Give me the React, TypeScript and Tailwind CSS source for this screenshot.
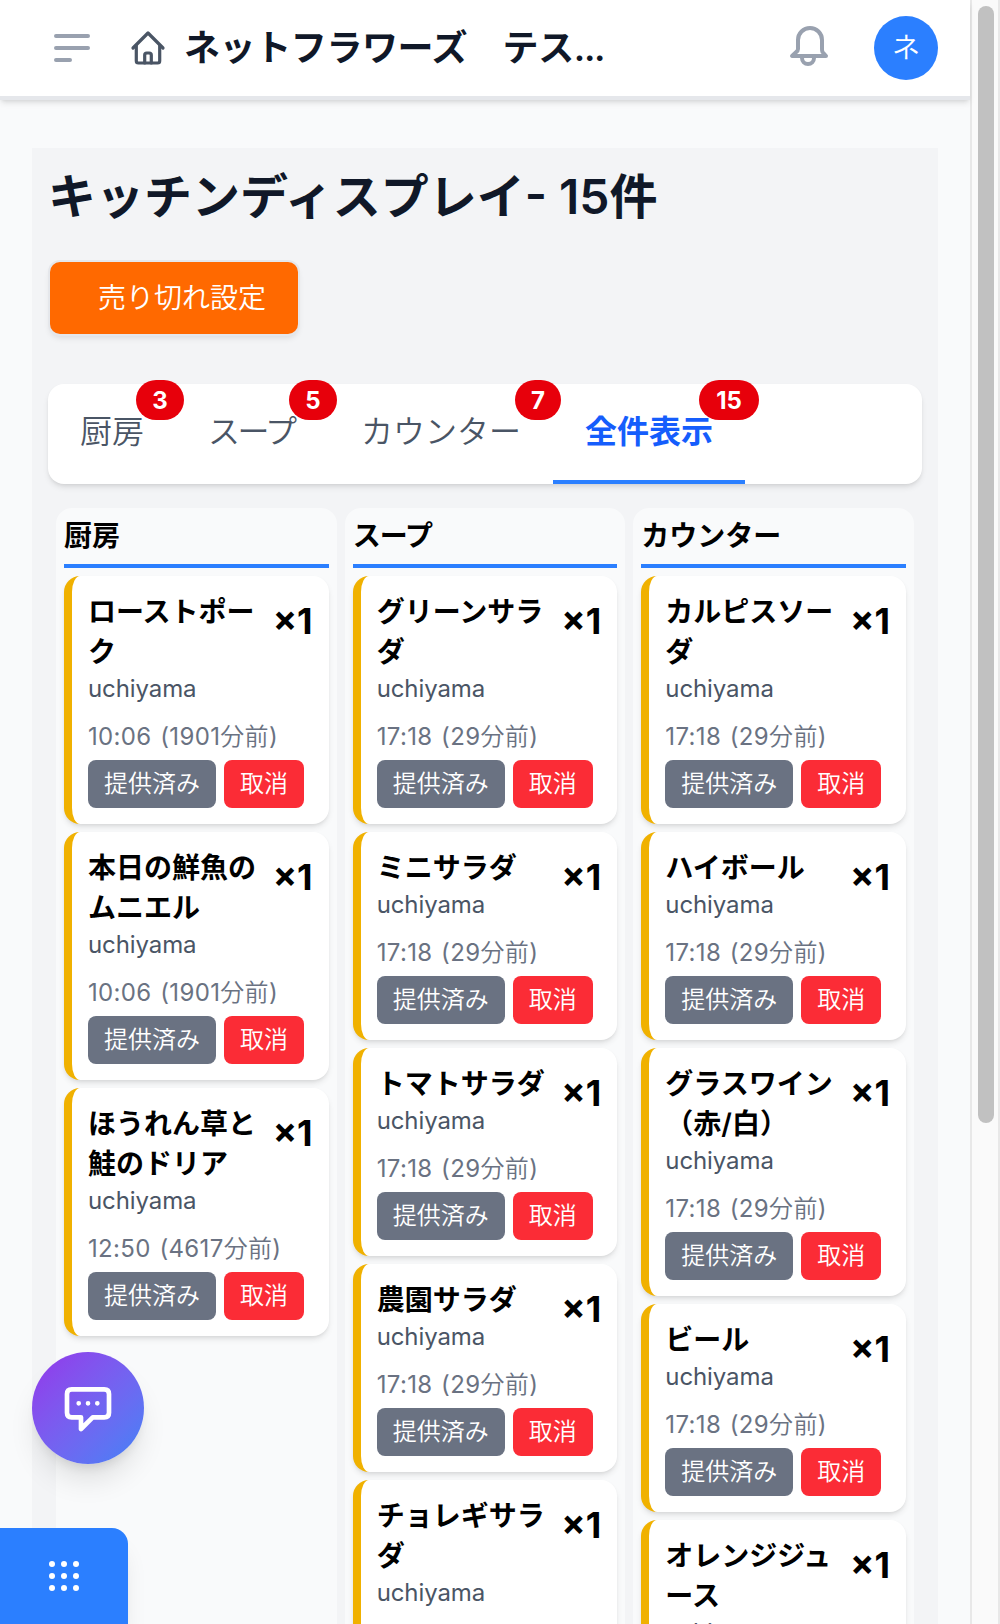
import { useState } from 'react';

type Order = { name: string; user: string; time: string; ago: number };

const u = 'uchiyama';

const stations: { name: string; tight?: boolean; orders: Order[] }[] = [
  {
    name: '厨房',
    orders: [
      { name: 'ローストポー\nク', user: u, time: '10:06', ago: 1901 },
      { name: '本日の鮮魚の\nムニエル', user: u, time: '10:06', ago: 1901 },
      { name: 'ほうれん草と\n鮭のドリア', user: u, time: '12:50', ago: 4617 },
    ],
  },
  {
    name: 'スープ',
    tight: true,
    orders: [
      { name: 'グリーンサラ\nダ', user: u, time: '17:18', ago: 29 },
      { name: 'ミニサラダ', user: u, time: '17:18', ago: 29 },
      { name: 'トマトサラダ', user: u, time: '17:18', ago: 29 },
      { name: '農園サラダ', user: u, time: '17:18', ago: 29 },
      { name: 'チョレギサラ\nダ', user: u, time: '17:18', ago: 29 },
    ],
  },
  {
    name: 'カウンター',
    orders: [
      { name: 'カルピスソー\nダ', user: u, time: '17:18', ago: 29 },
      { name: 'ハイボール', user: u, time: '17:18', ago: 29 },
      { name: 'グラスワイン\n（赤/白）', user: u, time: '17:18', ago: 29 },
      { name: 'ビール', user: u, time: '17:18', ago: 29 },
      { name: 'オレンジジュ\nース', user: u, time: '17:18', ago: 29 },
    ],
  },
];

const tabs = [
  { label: '厨房', count: 3, width: 'w-[128px]', badge: '-right-2 w-12' },
  { label: 'スープ', count: 5, width: 'w-[153px]', badge: '-right-2 w-12', tight: true },
  { label: 'カウンター', count: 7, width: 'w-[224px]', badge: '-right-2 w-[46px]' },
  { label: '全件表示', count: 15, width: 'w-[192px]', badge: '-right-3.5 w-[60px]' },
];

function Header() {
  return (
    <header className="relative flex h-[100px] shrink-0 items-center border-b-4 border-gray-200 bg-white pl-12 pr-8 shadow-md">
      <svg className="h-12 w-12 shrink-0" viewBox="0 0 48 48" fill="none" stroke="#99a1af" strokeWidth="4" strokeLinecap="round">
        <path d="M8 12H40M8 24H40M8 36H22" />
      </svg>
      <svg className="ml-8 h-10 w-10 shrink-0" viewBox="0 0 40 40" fill="none" stroke="#4a5565" strokeWidth="3.2" strokeLinecap="round" strokeLinejoin="round">
        <path d="M5 20 20 5 35 20" />
        <path d="M8.3 17.5V33Q8.3 35 10.3 35H29.7Q31.7 35 31.7 33V17.5" />
        <path d="M16.7 35V27Q16.7 25 18.7 25H21.3Q23.3 25 23.3 27V35" />
      </svg>
      <h1 className="ml-4 w-[430px] whitespace-pre text-[36px] font-semibold leading-[56px] tracking-[-0.4px] text-gray-900">
        ネットフラワーズ　テス<span className="tracking-[-1.4px]">...</span>
      </h1>
      <svg className="ml-auto h-12 w-12 shrink-0" viewBox="0 0 48 48" fill="none" stroke="#99a1af" strokeWidth="4" strokeLinecap="round" strokeLinejoin="round">
        <path d="M6 32H40L36.5 28Q36 27 36 25V16A12 12 0 0 0 12 16V25Q12 27 10 28.3Z" />
        <path d="M16 32V34A6 6 0 0 0 28 34V32" />
      </svg>
      <div className="ml-10 flex h-16 w-16 items-center justify-center rounded-full bg-[#2b7fff] text-[28px] font-[350] text-white">ネ</div>
    </header>
  );
}

function OrderCard({ order }: { order: Order }) {
  return (
    <div className="rounded-2xl border-l-8 border-[#f0b100] bg-white p-4 shadow-md">
      <div className="flex justify-between">
        <div>
          <div className="whitespace-pre text-[28px] font-semibold leading-10">{order.name}</div>
          <div className="pt-px text-2xl leading-8 tracking-[-0.1px] text-gray-600">{order.user}</div>
        </div>
        <span className="pt-px text-4xl font-bold leading-[56px]">×1</span>
      </div>
      <div className="mt-4 whitespace-nowrap text-2xl leading-8 tracking-[0.35px] text-gray-500 [word-spacing:1.5px]">
        {order.time} ({order.ago}<span className="font-[350]">分前</span>)
      </div>
      <div className="mt-[7px] flex gap-2 text-2xl font-[350] text-white">
        <button className="h-12 w-32 rounded-lg bg-gray-500">提供済み</button>
        <button className="h-12 w-20 rounded-lg bg-[#fb2c36]">取消</button>
      </div>
    </div>
  );
}

export default function App() {
  const [active, setActive] = useState(3);

  return (
    <div className="relative flex h-[1624px] w-[1000px] overflow-hidden bg-gray-50 font-['Inter','Noto_Sans_CJK_JP',sans-serif] text-black">
      <div className="flex h-full w-[970px] flex-col">
        <Header />

        <main className="mx-8 mt-12 h-[1700px] shrink-0 bg-gray-100 px-4 pt-[17px]">
          <h2 className="text-[48px] font-semibold leading-[64px] text-gray-900">キッチンディスプレイ- 15件</h2>
          <button className="ml-0.5 mt-[33px] h-[72px] w-[248px] rounded-[10px] bg-[#ff6900] pl-4 text-[28px] font-[350] text-white shadow-[0_0_0_2px_#e5e7eb,0_4px_6px_rgba(0,0,0,0.1)]">
            売り切れ設定
          </button>

          <nav className="mt-[50px] flex h-[100px] rounded-2xl bg-white shadow-md">
            {tabs.map((tab, idx) => (
              <button
                key={tab.label}
                onClick={() => setActive(idx)}
                className={`relative h-full shrink-0 border-b-4 pl-8 text-left text-[32px] leading-[48px] ${tab.width} ${tab.tight ? 'tracking-[-2.5px]' : ''} ${active === idx ? 'border-[#2b7fff] font-semibold text-[#155dfc]' : 'border-transparent font-[350] text-gray-600'}`}
              >
                {tab.label}
                <span className={`absolute -top-1 flex h-10 items-center justify-center rounded-full bg-[#e7000b] pt-0.5 text-2xl font-bold tracking-normal text-white ${tab.badge}`}>
                  {tab.count}
                </span>
              </button>
            ))}
          </nav>

          <div className="mx-2 mt-6 grid h-[1300px] grid-cols-3 gap-2">
            {stations.map((station) => (
              <section key={station.name} className="rounded-2xl bg-gray-50 p-2">
                <h3 className={`h-[52px] border-b-4 border-[#2b7fff] text-[28px] font-semibold leading-10 ${station.tight ? 'tracking-[-1px]' : ''}`}>
                  {station.name}
                </h3>
                <div className="mt-2 flex flex-col gap-2">
                  {station.orders.map((order) => (
                    <OrderCard key={order.name} order={order} />
                  ))}
                </div>
              </section>
            ))}
          </div>
        </main>
      </div>

      {/* scrollbar */}
      <div className="w-[30px] border-x-2 border-[#e8e8e8] bg-[#fafafa] pl-1.5 pt-1.5">
        <div className="h-[1117px] w-4 rounded-full bg-[#c1c1c1]" />
      </div>

      <button className="absolute left-8 top-[1352px] flex h-28 w-28 items-center justify-center rounded-full bg-linear-to-br from-[#9333ea] to-[#3b82f6] shadow-[0_20px_30px_-6px_rgba(0,0,0,0.12),0_8px_12px_-6px_rgba(0,0,0,0.12)]">
        <svg className="h-14 w-14" viewBox="0 0 56 56" fill="none" stroke="white" strokeWidth="4.67" strokeLinecap="round" strokeLinejoin="round">
          <path d="M21 37.3H11.7Q7 37.3 7 32.7V14Q7 9.3 11.7 9.3H44.3Q49 9.3 49 14V32.7Q49 37.3 44.3 37.3H32.7L21 49V37.3Z" />
          <path d="M18.7 23.3h.02M28 23.3h.02M37.3 23.3h.02" />
        </svg>
      </button>

      <button className="absolute bottom-0 left-0 flex h-24 w-32 items-center justify-center rounded-tr-2xl bg-[#2b7fff] shadow-xl">
        <svg className="h-12 w-12" viewBox="0 0 48 48" fill="white">
          {[12, 24, 36].map((y) => [12, 24, 36].map((x) => <circle key={`${x}-${y}`} cx={x} cy={y} r="3" />))}
        </svg>
      </button>
    </div>
  );
}
